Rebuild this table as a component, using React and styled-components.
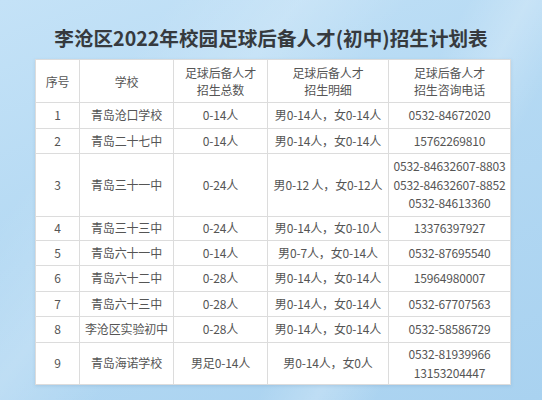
import React from "react";
import styled, { createGlobalStyle } from "styled-components";

const GlobalStyle = createGlobalStyle`
  html, body {
    margin: 0;
    padding: 0;
  }
  body {
    font-family: "Noto Sans CJK SC", "Noto Sans", sans-serif;
  }
`;

const Page = styled.div`
  width: 542px;
  height: 400px;
  overflow: hidden;
  box-sizing: border-box;
  padding: 23px 0 0 35px;
  background:
    linear-gradient(118deg, transparent 62%, rgba(255, 255, 255, 0.22) 70%, transparent 78%),
    linear-gradient(128deg, transparent 20%, rgba(255, 255, 255, 0.18) 35%, transparent 48%),
    linear-gradient(160deg, #c4e2f7 0%, #b4d9f3 45%, #a9d2f0 100%);
`;

const Title = styled.h1`
  margin: 0 0 6px -35px;
  width: 542px;
  text-align: center;
  font-size: 19.6px;
  line-height: 30px;
  font-weight: 700;
  color: #363a3e;
`;

const Table = styled.table`
  width: 475px;
  border-collapse: collapse;
  table-layout: fixed;
  background: #ffffff;
  box-shadow: 0 1px 3px rgba(80, 120, 160, 0.18);
  font-size: 12px;
  letter-spacing: -0.15px;
  color: #555;
`;

const Col = styled.col`
  width: ${(p) => p.$w}px;
`;

const Row = styled.tr`
  height: ${(p) => p.$h}px;
`;

const HeadCell = styled.th`
  border: 1px solid #dcdcdc;
  padding: 0 2px;
  font-weight: 400;
  line-height: 17px;
  text-align: center;
  vertical-align: middle;
  color: #555;
`;

const Cell = styled.td`
  border: 1px solid #dcdcdc;
  padding: 0 1px;
  line-height: 18.5px;
  text-align: center;
  vertical-align: middle;
  white-space: nowrap;
`;

const Line = styled.div`
  white-space: nowrap;
`;

const rows = [
  { h: 26, n: "1", school: "青岛沧口学校", total: "0-14人", detail: "男0-14人，女0-14人", tel: ["0532-84672020"] },
  { h: 25, n: "2", school: "青岛二十七中", total: "0-14人", detail: "男0-14人，女0-14人", tel: ["15762269810"] },
  {
    h: 63,
    n: "3",
    school: "青岛三十一中",
    total: "0-24人",
    detail: "男0-12 人，女0-12人",
    tel: ["0532-84632607-8803", "0532-84632607-8852", "0532-84613360"],
  },
  { h: 24, n: "4", school: "青岛三十三中", total: "0-24人", detail: "男0-14人，女0-10人", tel: ["13376397927"] },
  { h: 25, n: "5", school: "青岛六十一中", total: "0-14人", detail: "男0-7人，女0-14人", tel: ["0532-87695540"] },
  { h: 26, n: "6", school: "青岛六十二中", total: "0-28人", detail: "男0-14人，女0-14人", tel: ["15964980007"] },
  { h: 25, n: "7", school: "青岛六十三中", total: "0-28人", detail: "男0-14人，女0-14人", tel: ["0532-67707563"] },
  { h: 26, n: "8", school: "李沧区实验初中", total: "0-28人", detail: "男0-14人，女0-14人", tel: ["0532-58586729"] },
  {
    h: 42,
    n: "9",
    school: "青岛海诺学校",
    total: "男足0-14人",
    detail: "男0-14人，女0人",
    tel: ["0532-81939966", "13153204447"],
  },
];

export default function App() {
  return (
    <>
      <GlobalStyle />
      <Page>
        <Title>李沧区2022年校园足球后备人才(初中)招生计划表</Title>
        <Table>
          <colgroup>
            <Col $w={44} />
            <Col $w={94} />
            <Col $w={94} />
            <Col $w={121} />
            <Col $w={122} />
          </colgroup>
          <thead>
            <Row $h={43}>
              <HeadCell>序号</HeadCell>
              <HeadCell>学校</HeadCell>
              <HeadCell>
                <Line>足球后备人才</Line>
                <Line>招生总数</Line>
              </HeadCell>
              <HeadCell>
                <Line>足球后备人才</Line>
                <Line>招生明细</Line>
              </HeadCell>
              <HeadCell>
                <Line>足球后备人才</Line>
                <Line>招生咨询电话</Line>
              </HeadCell>
            </Row>
          </thead>
          <tbody>
            {rows.map((r) => (
              <Row key={r.n} $h={r.h}>
                <Cell>{r.n}</Cell>
                <Cell>{r.school}</Cell>
                <Cell>{r.total}</Cell>
                <Cell>{r.detail}</Cell>
                <Cell>
                  {r.tel.map((t) => (
                    <Line key={t}>{t}</Line>
                  ))}
                </Cell>
              </Row>
            ))}
          </tbody>
        </Table>
      </Page>
    </>
  );
}
